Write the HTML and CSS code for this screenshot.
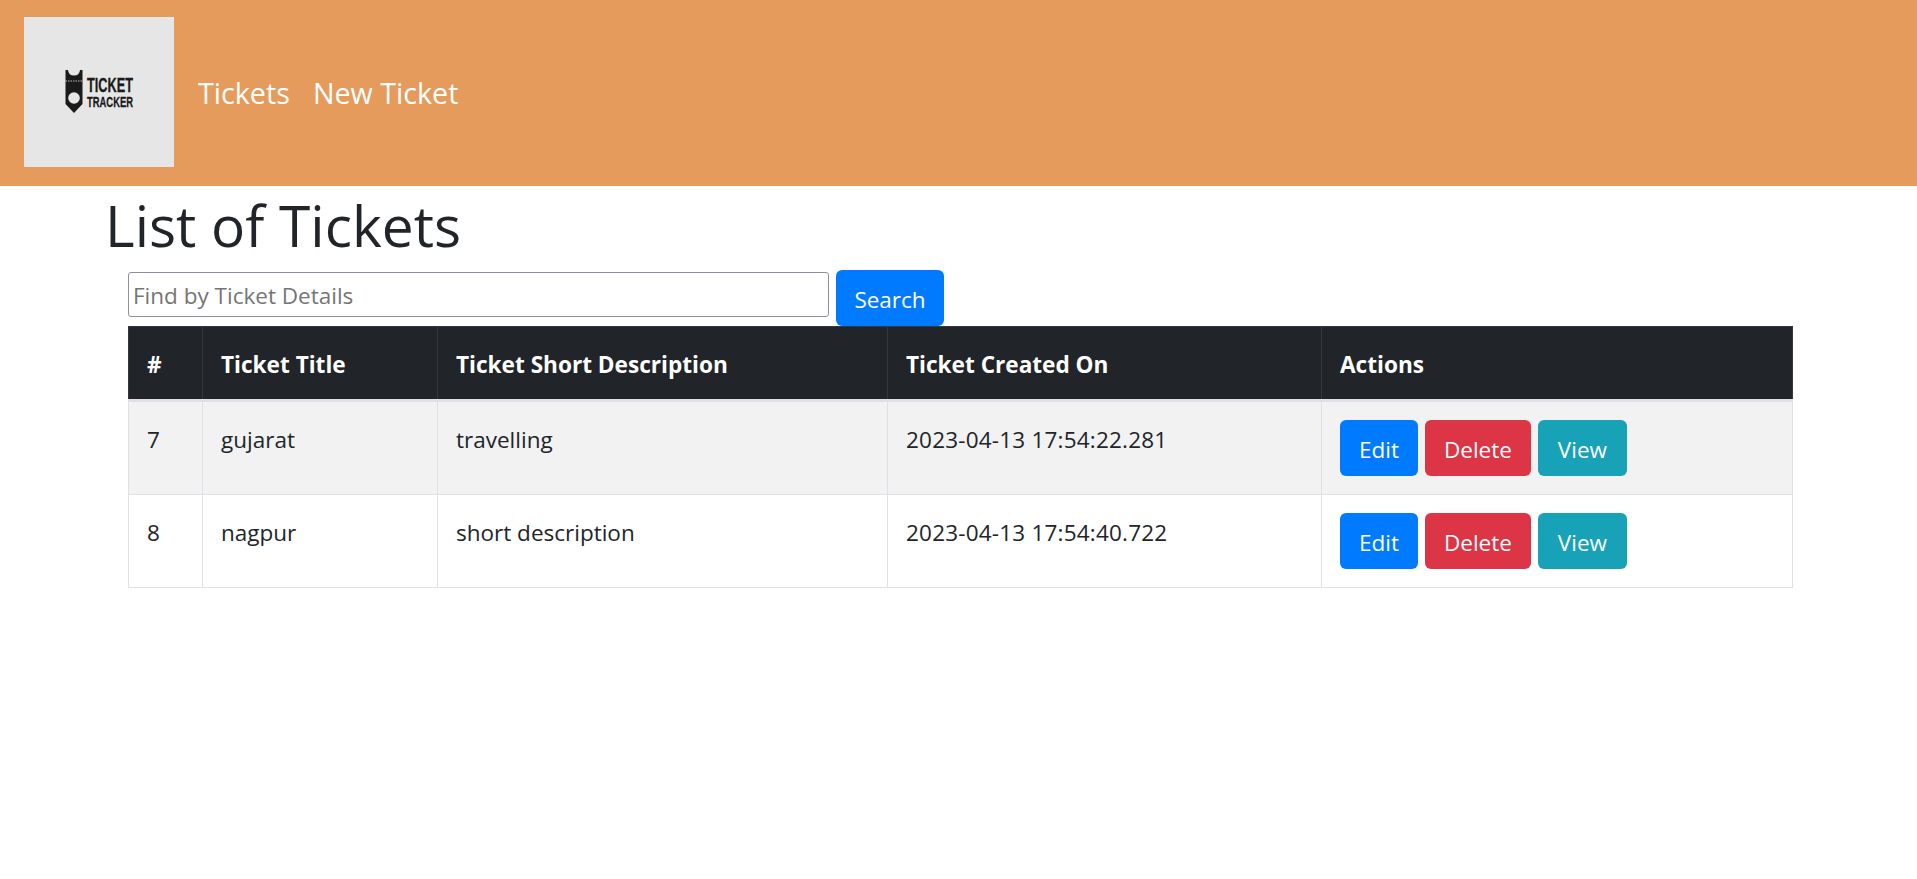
FILE: index.html
```html
<!DOCTYPE html>
<html lang="en">
<head>
<meta charset="utf-8">
<title>Ticket Tracker</title>
<link rel="stylesheet" href="styles.css">
</head>
<body>
<header class="navbar">
  <a class="brand" href="#" aria-label="Ticket Tracker">
    <svg class="logo" viewBox="0 0 150 150" width="150" height="150">
      <rect width="150" height="150" fill="#e6e6e6"/>
      <path d="M41.500 53 H44 Q44.500 58.500 50 58.500 Q55.500 58.500 56 53 H58.500 V87 L50 96 L41.500 87 Z" fill="#1a1a1a"/>
      <path d="M41.500 64 H58.500" stroke="#e6e6e6" stroke-width=".8" stroke-dasharray="1.500 1"/>
      <circle cx="50" cy="81" r="5.800" fill="#e6e6e6"/>
      <text class="logo-text" x="63" y="74.500" textLength="46" lengthAdjust="spacingAndGlyphs">TICKET</text>
      <text class="logo-text logo-text-small" x="63" y="90" textLength="46" lengthAdjust="spacingAndGlyphs">TRACKER</text>
    </svg>
  </a>
  <nav class="nav">
    <a class="nav-link" href="#">Tickets</a>
    <a class="nav-link" href="#">New Ticket</a>
  </nav>
</header>
<main class="container">
  <h1 class="title">List of Tickets</h1>
  <div class="content">
    <form class="search">
      <input class="search-input" type="text" placeholder="Find by Ticket Details">
      <button class="btn btn-blue btn-search" type="button">Search</button>
    </form>
    <table class="table">
      <colgroup>
        <col class="col-id"><col class="col-title"><col class="col-desc"><col class="col-date"><col>
      </colgroup>
      <thead>
        <tr><th>#</th><th>Ticket Title</th><th>Ticket Short Description</th><th>Ticket Created On</th><th>Actions</th></tr>
      </thead>
      <tbody>
        <tr class="odd">
          <td>7</td><td>gujarat</td><td>travelling</td><td class="date">2023-04-13 17:54:22.281</td>
          <td class="actions-cell"><div class="actions"><button class="btn btn-blue" type="button">Edit</button><button class="btn btn-red" type="button">Delete</button><button class="btn btn-teal" type="button">View</button></div></td>
        </tr>
        <tr>
          <td>8</td><td>nagpur</td><td>short description</td><td class="date">2023-04-13 17:54:40.722</td>
          <td class="actions-cell"><div class="actions"><button class="btn btn-blue" type="button">Edit</button><button class="btn btn-red" type="button">Delete</button><button class="btn btn-teal" type="button">View</button></div></td>
        </tr>
      </tbody>
    </table>
  </div>
</main>
</body>
</html>
```
FILE: styles.css
```css
* { box-sizing: border-box; }
html, body { margin: 0; padding: 0; }
body {
  font-family: "Open Sans", "Noto Sans", "Liberation Sans", sans-serif;
  font-size: 22.500px;
  line-height: 36px;
  color: #212529;
  background: #fff;
}
.navbar {
  display: flex;
  align-items: center;
  height: 186px;
  padding: 0 24px 2px;
  background: #e59b5c;
}
.brand { display: block; height: 150px; margin-right: 24px; }
.logo { display: block; }
.logo-text { font-family: "Liberation Sans Narrow", "Liberation Sans", sans-serif; font-weight: 700; font-size: 20px; fill: #1a1a1a; stroke: #1a1a1a; stroke-width: .3px; }
.logo-text-small { font-size: 15.500px; }
.nav { display: flex; gap: 23px; padding-top: 2px; }
.nav-link { color: #fff; text-decoration: none; font-size: 28.700px; line-height: 42px; }
.container { padding: 0 124px 0 105px; }
.title { margin: 3px 0 9px; font-size: 56.800px; font-weight: 400; line-height: 72px; }
.content { padding-left: 23px; }
.search { display: flex; align-items: flex-start; gap: 7px; }
.search-input {
  width: 701px;
  height: 45px;
  margin-top: 2px;
  padding: 2px 4px 0;
  font: inherit;
  border: 1px solid #8f8f9d;
  border-radius: 3px;
}
.search-input::placeholder { color: #757575; opacity: 1; }
.btn {
  height: 56px;
  padding: 11px 18px 7px;
  font: inherit;
  color: #fff;
  border: 1px solid transparent;
  border-radius: 6px;
}
.btn-blue { background: #007bff; }
.btn-red { background: #dc3545; }
.btn-teal { background: #17a2b8; min-width: 89px; }
.btn-search { width: 108px; padding-left: 0; padding-right: 0; }
.table { width: 1665px; border-collapse: collapse; table-layout: fixed; }
.col-id { width: 74px; }
.col-title { width: 235px; }
.col-desc { width: 450px; }
.col-date { width: 434px; }
th, td { padding: 20px 18px 16px; border: 1px solid #dee2e6; text-align: left; vertical-align: top; font-weight: 400; }
th {
  color: #fff;
  font-weight: 700;
  font-size: 22.600px;
  background: #212529;
  border-color: #32383e;
  border-bottom: 3px solid #dee2e6;
}
.odd td { background: #f2f2f2; }
.date { letter-spacing: .2px; }
.actions-cell { padding-top: 18px; padding-bottom: 18px; }
.actions { display: flex; gap: 7px; }
```
